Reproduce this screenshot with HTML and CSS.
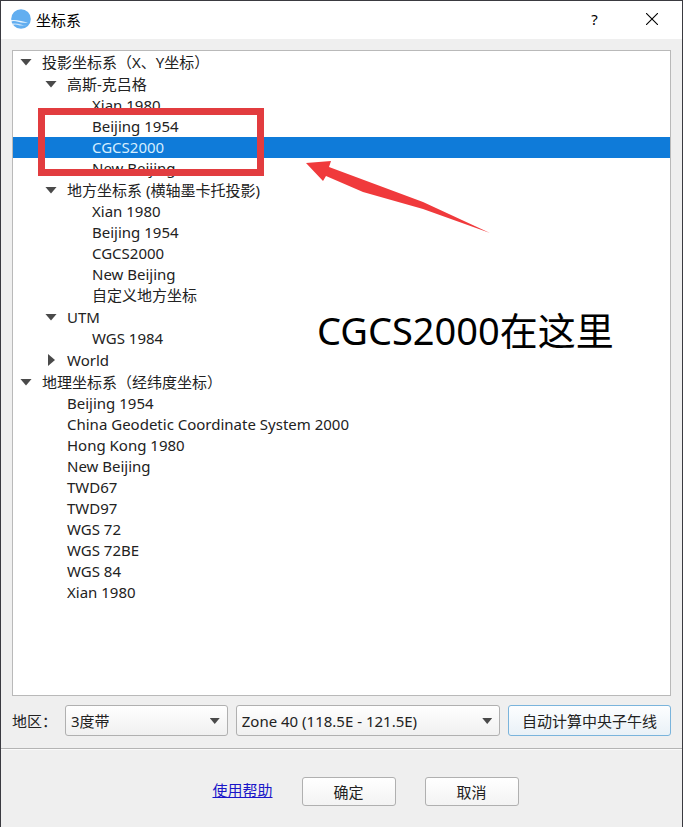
FILE: index.html
```html
<!DOCTYPE html>
<html lang="zh-CN">
    <head>
        <meta charset="UTF-8" />
        <meta name="viewport" content="width=device-width, initial-scale=1.0" />
        <title>坐标系</title>
        <link rel="stylesheet" href="styles.css">
    </head>
    <body>
        <div class="dialog">
            <header class="titlebar">
                <svg class="logo" viewBox="0 0 20 20" aria-hidden="true">
                    <circle cx="10" cy="10" r="9.8" fill="#62aef0" />
                    <path d="M0 11 Q5 10.6 10 12 T17 13.6 Q11 14.4 7 12.8 T0 12.4Z" fill="#eaf5fe" />
                    <path d="M1 14.6 Q6 14 10 15.4 T15 16.2 Q10 17 7 16 T2 16Z" fill="#cfe6fa" />
                </svg>
                <h1>坐标系</h1>
                <button type="button" class="title-btn" aria-label="帮助">?</button>
                <button type="button" class="title-btn" aria-label="关闭">
                    <svg class="close" viewBox="0 0 12 12" aria-hidden="true">
                        <path d="M0 0L12 12M12 0L0 12" stroke="#000" stroke-width="1.1" />
                    </svg>
                </button>
            </header>

            <main class="content">
                <div class="tree">
                    <details open>
                        <summary>投影坐标系（X、Y坐标）</summary>
                        <details open>
                            <summary>高斯-克吕格</summary>
                            <ul>
                                <li>Xian 1980</li>
                                <li>Beijing 1954</li>
                                <li class="selected">CGCS2000</li>
                                <li>New Beijing</li>
                            </ul>
                        </details>
                        <details open>
                            <summary>地方坐标系 (横轴墨卡托投影)</summary>
                            <ul>
                                <li>Xian 1980</li>
                                <li>Beijing 1954</li>
                                <li>CGCS2000</li>
                                <li>New Beijing</li>
                                <li>自定义地方坐标</li>
                            </ul>
                        </details>
                        <details open>
                            <summary>UTM</summary>
                            <ul>
                                <li>WGS 1984</li>
                            </ul>
                        </details>
                        <details>
                            <summary>World</summary>
                        </details>
                    </details>
                    <details open>
                        <summary>地理坐标系（经纬度坐标）</summary>
                        <ul>
                            <li>Beijing 1954</li>
                            <li>China Geodetic Coordinate System 2000</li>
                            <li>Hong Kong 1980</li>
                            <li>New Beijing</li>
                            <li>TWD67</li>
                            <li>TWD97</li>
                            <li>WGS 72</li>
                            <li>WGS 72BE</li>
                            <li>WGS 84</li>
                            <li>Xian 1980</li>
                        </ul>
                    </details>

                    <!-- hint drawn over the tree -->
                    <div class="mark"></div>
                    <svg class="arrow" viewBox="0 0 186 74" aria-hidden="true">
                        <path d="M1 3L26 1L24 7L118 42L185 73L118 49L58 32L21 16L18 21Z" fill="#f03a3c" />
                    </svg>
                    <p class="callout">CGCS2000在这里</p>
                </div>

                <div class="zone">
                    <label for="band">地区：</label>
                    <div class="combo">
                        <select id="band">
                            <option>3度带</option>
                            <option>6度带</option>
                        </select>
                    </div>
                    <div class="combo">
                        <select id="zone" aria-label="Zone">
                            <option>Zone 40 (118.5E - 121.5E)</option>
                        </select>
                    </div>
                    <button type="button" class="btn btn-focus">自动计算中央子午线</button>
                </div>
            </main>

            <footer class="actions">
                <a href="#">使用帮助</a>
                <button type="button" class="btn">确定</button>
                <button type="button" class="btn">取消</button>
            </footer>
        </div>
    </body>
</html>
```
FILE: styles.css
```css
* {
    box-sizing: border-box;
}
body {
    margin: 0;
    font-family: "Noto Sans", "Noto Sans CJK SC", sans-serif;
    font-size: 15px;
    color: #222;
}
button,
select {
    font: inherit;
    color: inherit;
}
.dialog {
    display: flex;
    flex-direction: column;
    min-height: 100vh;
    background-color: #efefef;
    border: 1px solid #3a3a40;
    border-bottom: none;
}
.titlebar {
    display: flex;
    align-items: center;
    height: 38px;
    padding: 0 2px 2px 10px;
    background-color: #fff;
}
.logo {
    width: 20px;
    height: 20px;
}
h1 {
    flex: 1;
    margin: 0 0 0 5px;
    font-size: 15px;
    font-weight: normal;
    color: #000;
}
.title-btn {
    display: flex;
    justify-content: center;
    align-items: center;
    width: 57px;
    height: 36px;
    padding: 0;
    border: none;
    background: none;
    color: #000;
}
.close {
    width: 12px;
    height: 12px;
}
.content {
    flex: 1;
    display: flex;
    flex-direction: column;
    padding: 11px 11px 12px;
    border-bottom: 1px solid #b4b4b4;
}

/* tree */
.tree {
    position: relative;
    flex: 1;
    overflow: hidden;
    background-color: #fff;
    border: 1px solid #b9b9b9;
}
.tree ul {
    margin: 0;
    padding: 0;
    list-style: none;
}
.tree summary {
    display: flex;
    align-items: center;
    height: 22px;
    padding-left: 7px;
    line-height: 22px;
    cursor: default;
}
.tree summary::before {
    content: "";
    width: 12px;
    height: 7px;
    margin-right: 10px;
    background-color: #4a4a4a;
    clip-path: polygon(0 0, 100% 0, 50% 100%);
}
.tree details:not([open]) > summary::before {
    width: 7px;
    height: 12px;
    margin: 0 12px 0 3px;
    clip-path: polygon(0 0, 100% 50%, 0 100%);
}
.tree details details summary {
    padding-left: 32px;
}
.tree li {
    height: 21px;
    padding-left: 54px;
    line-height: 21px;
}
.tree details details li {
    padding-left: 79px;
}
.tree .selected {
    background-color: #0f7bd9;
    color: #d5eeff;
}

/* hint */
.mark {
    position: absolute;
    top: 57px;
    left: 25px;
    width: 226px;
    height: 68px;
    border: 7px solid #e23c3f;
}
.arrow {
    position: absolute;
    top: 109px;
    left: 292px;
    width: 186px;
    height: 74px;
}
.callout {
    position: absolute;
    top: 254px;
    left: 304px;
    margin: 0;
    font-size: 38px;
    line-height: 50px;
    color: #000;
    white-space: nowrap;
}

/* zone row */
.zone {
    display: grid;
    grid-template-columns: 45px 8fr 13fr 8fr;
    gap: 8px;
    align-items: center;
    margin-top: 9px;
}
.zone label {
    white-space: nowrap;
}
.combo {
    position: relative;
}
.combo::after {
    content: "";
    position: absolute;
    top: 13px;
    right: 8px;
    width: 10px;
    height: 6px;
    background-color: #4a4a4a;
    clip-path: polygon(0 0, 100% 0, 50% 100%);
    pointer-events: none;
}
.combo select {
    width: 100%;
    height: 31px;
    padding: 0 24px 0 5px;
    appearance: none;
    border: 1px solid #b0b0b0;
    border-radius: 3px;
    background: linear-gradient(#fff, #f0f0f0);
}
.btn {
    height: 29px;
    padding: 0;
    border: 1px solid #b0b0b0;
    border-radius: 3px;
    background: linear-gradient(#fff, #f3f3f3);
    white-space: nowrap;
}
.btn-focus {
    height: 31px;
    border-color: #7ab4dc;
    background: linear-gradient(#fdfeff, #e9f1f7);
}

/* footer */
.actions {
    display: flex;
    justify-content: center;
    align-items: center;
    gap: 29px;
    padding: 27px 0 21px 48px;
    border-top: 1px solid #fafafa;
}
.actions .btn {
    width: 94px;
}
.actions a {
    padding-bottom: 4px;
    color: #1a16c8;
}
```
